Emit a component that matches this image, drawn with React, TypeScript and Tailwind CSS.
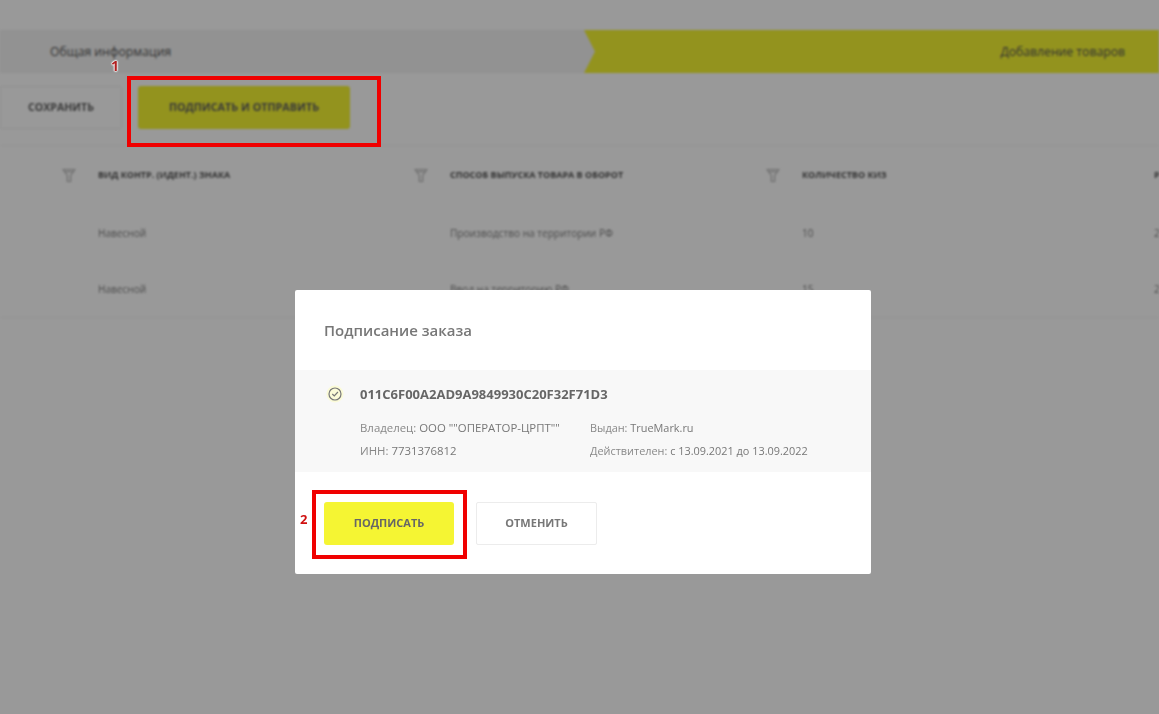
const font = { fontFamily: '"Open Sans", "Noto Sans", sans-serif' };

function FilterIcon() {
  return (
    <svg width="14" height="15" viewBox="0 0 14 15" fill="none" stroke="#b4b4b4" strokeWidth="1.2" strokeLinejoin="round">
      <path d="M1 1.5h12L8.6 7.5v6H5.4v-6z" />
      <path d="M3 3.6h8" />
    </svg>
  );
}

const columns = [
  { title: 'ВИД КОНТР. (ИДЕНТ.) ЗНАКА', rows: ['Навесной', 'Навесной'], filter: true },
  { title: 'СПОСОБ ВЫПУСКА ТОВАРА В ОБОРОТ', rows: ['Производство на территории РФ', 'Ввод на территорию РФ'], filter: true },
  { title: 'КОЛИЧЕСТВО КИЗ', rows: ['10', '15'], filter: false },
];

function Table() {
  return (
    <div className="flex h-[172px] border-b border-[#f6f6f6]">
      <div className="w-[98px] shrink-0 h-[59px] flex items-center justify-end pr-[22px]">
        <FilterIcon />
      </div>
      {columns.map((col) => (
        <div key={col.title} className="w-[352px] shrink-0 flex flex-col">
          <div className="h-[59px] mb-px flex items-center justify-between pr-[22px]">
            <span className="text-[9px] font-bold text-[#555]">{col.title}</span>
            {col.filter && <FilterIcon />}
          </div>
          {col.rows.map((r, i) => (
            <div key={i} className="h-[56.5px] flex items-center text-[10.1px] text-[#808080]">
              {r}
            </div>
          ))}
        </div>
      ))}
      <div className="flex-1 min-w-0 overflow-hidden flex flex-col text-[#808080]">
        <div className="h-[59px] mb-px flex items-center text-[9px] font-bold text-[#555]">Р</div>
        <div className="h-[56.5px] flex items-center text-[10.1px]">2</div>
        <div className="h-[56.5px] flex items-center text-[10.1px]">2</div>
      </div>
    </div>
  );
}

export default function App() {
  return (
    <div style={font} className="relative w-[1159px] h-[714px] overflow-hidden bg-white">
      {/* page behind the dialog */}
      <div className="blur-[0.8px]">
        <div className="pt-[30px] flex h-[73px]">
          <div className="w-[596px] h-[43px] -mr-[12px] bg-[#f3f3f3] [clip-path:polygon(0_0,585px_0,100%_50%,585px_100%,0_100%)] flex items-center pl-[50px]">
            <span className="text-[12.2px] leading-[14px] text-[#555]">Общая информация</span>
          </div>
          <div className="flex-1 h-[43px] bg-[#f5f533] [clip-path:polygon(0_0,100%_0,100%_100%,0_100%,11px_50%)] flex items-center justify-end pr-[34px]">
            <span className="text-[12.2px] leading-[14px] text-[#555]">Добавление товаров</span>
          </div>
        </div>
        <div className="h-[73px] flex items-start pt-[13px] gap-4 border-b border-[#f6f6f6]">
          <button className="w-[122px] h-[43px] border border-[#f1f1f1] rounded-r-[2px] text-[10.6px] font-bold text-[#606060]">
            СОХРАНИТЬ
          </button>
          <button className="w-[212px] h-[43px] bg-[#f5f533] rounded-[3px] text-[10.8px] font-bold text-[#606060]">
            ПОДПИСАТЬ И ОТПРАВИТЬ
          </button>
        </div>
        <Table />
      </div>

      <div className="absolute inset-0 bg-black/40" />

      {/* annotation 1 */}
      <div className="absolute left-[127px] top-[76px] w-[254px] h-[71px] border-4 border-[#f00000]" />
      <span className="absolute left-[111px] top-[60px] text-[14px] leading-[12px] font-bold text-[#b02020] [text-shadow:0_0_1px_#fff,0_0_1px_#fff,0_0_2px_#fff,0_0_2px_#fff,0_0_2px_#fff]">
        1
      </span>

      {/* dialog */}
      <div className="absolute left-[295px] top-[290px] w-[576px] h-[284px] bg-white rounded-[2px] blur-[0.5px]">
        <div className="h-[80px] pt-[1px] flex items-center pl-[29px]">
          <span className="text-[15px] font-semibold text-[#777]">Подписание заказа</span>
        </div>
        <div className="h-[102px] bg-[#f8f8f8] pl-[31px] pt-[14px] flex gap-[16px]">
          <svg className="mt-[1px] shrink-0" width="18" height="18" viewBox="0 0 18 18" fill="none">
            <circle cx="9" cy="9" r="8.5" fill="#fbfbd8" />
            <circle cx="9" cy="9" r="6" stroke="#777" strokeWidth="1.2" />
            <path d="M6.3 9l2 2 3.6-4" stroke="#777" strokeWidth="1.2" />
          </svg>
          <div className="flex flex-col">
            <span className="text-[13px] leading-[20px] font-bold text-[#666]">011C6F00A2AD9A9849930C20F32F71D3</span>
            <div className="mt-[12px] flex leading-[23px] text-[#888]">
              <div className="w-[230px] flex flex-col text-[11.4px]">
                <span>
                  Владелец: <span className="text-[#777]">ООО ""ОПЕРАТОР-ЦРПТ""</span>
                </span>
                <span>
                  ИНН: <span className="text-[#777]">7731376812</span>
                </span>
              </div>
              <div className="flex flex-col text-[10.9px]">
                <span>
                  Выдан: <span className="text-[#777]">TrueMark.ru</span>
                </span>
                <span>
                  Действителен: <span className="text-[#777]">с 13.09.2021 до 13.09.2022</span>
                </span>
              </div>
            </div>
          </div>
        </div>
        <div className="pl-[29px] pt-[30px] flex gap-[22px]">
          <button className="w-[130px] h-[43px] bg-[#f5f533] rounded-[3px] text-[11px] font-bold text-[#666]">
            ПОДПИСАТЬ
          </button>
          <button className="w-[121px] h-[43px] bg-white border border-[#ececec] rounded-[2px] text-[11px] font-bold text-[#777]">
            ОТМЕНИТЬ
          </button>
        </div>
      </div>

      {/* annotation 2 */}
      <div className="absolute left-[312px] top-[490px] w-[155px] h-[69px] border-4 border-[#f00000]" />
      <span className="absolute left-[300px] top-[510px] text-[13px] leading-[18px] font-bold text-[#d01010] [text-shadow:0_0_2px_#fff]">
        2
      </span>
    </div>
  );
}
